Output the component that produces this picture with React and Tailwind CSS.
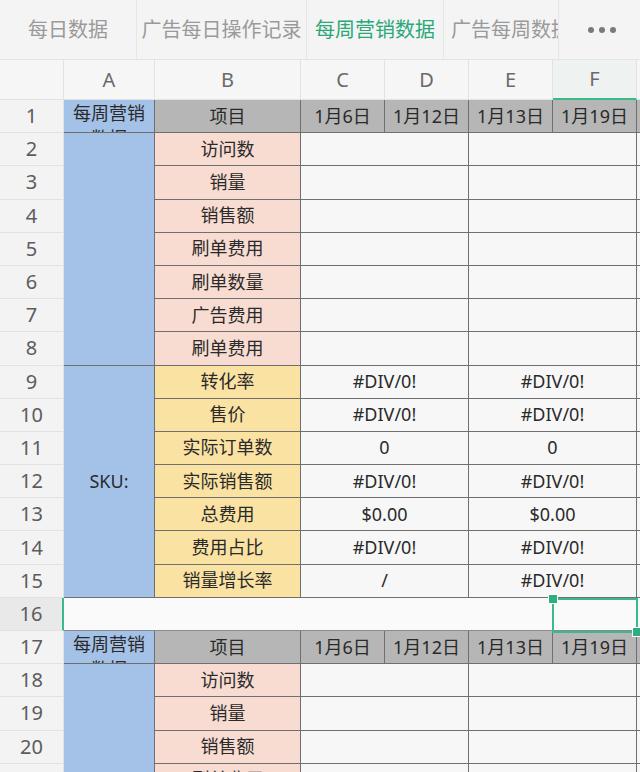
import React from "react";

const FONT = { fontFamily: '"Noto Sans", "Noto Sans CJK SC", sans-serif' };

function RowNum({ n, active }) {
  return (
    <div
      className={
        "flex items-center justify-center text-[20px] text-[#5c5c5c] border-b border-[#e2e2e2] " +
        (active
          ? "bg-[#e9e9e9] border-r-2 border-r-[#3cb88d]"
          : "bg-[#f3f3f3] border-r border-r-[#e2e2e2]")
      }
    >
      {n}
    </div>
  );
}

function ColHead({ label, active }) {
  return (
    <div
      className={
        "flex items-center justify-center text-[20px] text-[#6a6a6a] border-r border-[#e2e2e2] " +
        (active ? "bg-[#eef3f2] border-b-2 border-b-[#3cb88d]" : "bg-[#f6f6f6] border-b border-b-[#e2e2e2]")
      }
    >
      {label}
    </div>
  );
}

const cellText = "flex items-center justify-center text-[18px] text-[#2a2a2a] border-r border-b border-[#6f6f6f]";

function HeaderRow({ n }) {
  return (
    <>
      <RowNum n={n} />
      <div className="overflow-hidden bg-[#a4c2e8] border-r border-b border-[#6f6f6f] text-center text-[18px] leading-[25px] text-[#2a2a2a] pt-px px-[9px]">
        每周营销数据
      </div>
      <div className={cellText + " bg-[#b6b6b6]"}>项目</div>
      <div className={cellText + " bg-[#b6b6b6]"}>1月6日</div>
      <div className={cellText + " bg-[#b6b6b6]"}>1月12日</div>
      <div className={cellText + " bg-[#b6b6b6]"}>1月13日</div>
      <div className={cellText + " bg-[#b6b6b6]"}>1月19日</div>
      <div className="bg-[#b6b6b6] border-b border-[#6f6f6f]"></div>
    </>
  );
}

function DataRow({ n, label, tone, cd = "", ef = "", first, span }) {
  const bg = tone === "pink" ? " bg-[#f8dcd2]" : " bg-[#fae2a2]";
  return (
    <>
      <RowNum n={n} />
      {first === "blue7" && (
        <div className="row-span-7 bg-[#a4c2e8] border-r border-b border-[#6f6f6f]"></div>
      )}
      {first === "sku7" && (
        <div className="row-span-7 flex items-center justify-center bg-[#a4c2e8] border-r border-b border-[#6f6f6f] text-[18px] text-[#2a2a2a]">
          SKU:
        </div>
      )}
      {first === "blue4" && (
        <div className="row-span-4 bg-[#a4c2e8] border-r border-b border-[#6f6f6f]"></div>
      )}
      <div className={cellText + bg}>{label}</div>
      <div className={cellText + " col-span-2 bg-[#f7f7f7]"}>{cd}</div>
      <div className={cellText + " col-span-2 bg-[#f7f7f7]"}>{ef}</div>
      <div className="bg-[#f7f7f7] border-b border-[#6f6f6f]"></div>
    </>
  );
}

export default function App() {
  const tabs = [
    { t: "每日数据", w: "w-[137px]" },
    { t: "广告每日操作记录", w: "w-[170px]" },
    { t: "每周营销数据", w: "w-[137px]", active: true },
  ];
  return (
    <div style={FONT} className="w-[640px] h-[772px] overflow-hidden bg-[#f7f7f7]">
      {/* Tab bar */}
      <div className="flex h-[60px] bg-[#f4f4f4] border-b border-[#e4e4e4]">
        {tabs.map((tab) => (
          <div
            key={tab.t}
            className={
              tab.w +
              " shrink-0 flex items-center justify-center border-r border-[#e6e6e6] text-[20px] whitespace-nowrap " +
              (tab.active ? "text-[#2aa878]" : "text-[#9a9a9a]")
            }
          >
            {tab.t}
          </div>
        ))}
        <div className="w-[115px] shrink-0 flex items-center overflow-hidden border-r border-[#e6e6e6] pl-[7px] text-[20px] whitespace-nowrap text-[#9a9a9a]">
          广告每周数据
        </div>
        <div className="flex-1 flex items-center justify-center gap-[5px] pl-[4px]">
          <span className="w-[6px] h-[6px] rounded-full bg-[#7a7a7a]"></span>
          <span className="w-[6px] h-[6px] rounded-full bg-[#7a7a7a]"></span>
          <span className="w-[6px] h-[6px] rounded-full bg-[#7a7a7a]"></span>
        </div>
      </div>

      {/* Sheet */}
      <div className="relative h-[712px] overflow-hidden">
        <div className="grid grid-cols-[64px_91px_146px_84px_84px_84px_84px_1fr] grid-rows-[40px_repeat(21,33.2px)]">
          <div className="bg-[#f6f6f6] border-r border-b border-[#e2e2e2]"></div>
          <ColHead label="A" />
          <ColHead label="B" />
          <ColHead label="C" />
          <ColHead label="D" />
          <ColHead label="E" />
          <ColHead label="F" active />
          <div className="bg-[#f6f6f6] border-b border-[#e2e2e2]"></div>

          <HeaderRow n={1} />
          <DataRow n={2} label="访问数" tone="pink" first="blue7" />
          <DataRow n={3} label="销量" tone="pink" />
          <DataRow n={4} label="销售额" tone="pink" />
          <DataRow n={5} label="刷单费用" tone="pink" />
          <DataRow n={6} label="刷单数量" tone="pink" />
          <DataRow n={7} label="广告费用" tone="pink" />
          <DataRow n={8} label="刷单费用" tone="pink" />
          <DataRow n={9} label="转化率" tone="yellow" cd="#DIV/0!" ef="#DIV/0!" first="sku7" />
          <DataRow n={10} label="售价" tone="yellow" cd="#DIV/0!" ef="#DIV/0!" />
          <DataRow n={11} label="实际订单数" tone="yellow" cd="0" ef="0" />
          <DataRow n={12} label="实际销售额" tone="yellow" cd="#DIV/0!" ef="#DIV/0!" />
          <DataRow n={13} label="总费用" tone="yellow" cd="$0.00" ef="$0.00" />
          <DataRow n={14} label="费用占比" tone="yellow" cd="#DIV/0!" ef="#DIV/0!" />
          <DataRow n={15} label="销量增长率" tone="yellow" cd="/" ef="#DIV/0!" />

          <RowNum n={16} active />
          <div className="col-span-7 bg-[#fafafa] border-b border-[#8a8a8a]"></div>

          <HeaderRow n={17} />
          <DataRow n={18} label="访问数" tone="pink" first="blue4" />
          <DataRow n={19} label="销量" tone="pink" />
          <DataRow n={20} label="销售额" tone="pink" />
          <DataRow n={21} label="刷单费用" tone="pink" />
        </div>

        {/* Selection overlay */}
        <div className="absolute left-[552px] top-[538px] w-[86px] h-[35px] border-2 border-[#3cb88d]"></div>
        <div className="absolute left-[548px] top-[534px] w-[10px] h-[10px] bg-[#2fae7f] border border-white"></div>
        <div className="absolute left-[632px] top-[567px] w-[10px] h-[10px] bg-[#2fae7f] border border-white"></div>
      </div>
    </div>
  );
}
